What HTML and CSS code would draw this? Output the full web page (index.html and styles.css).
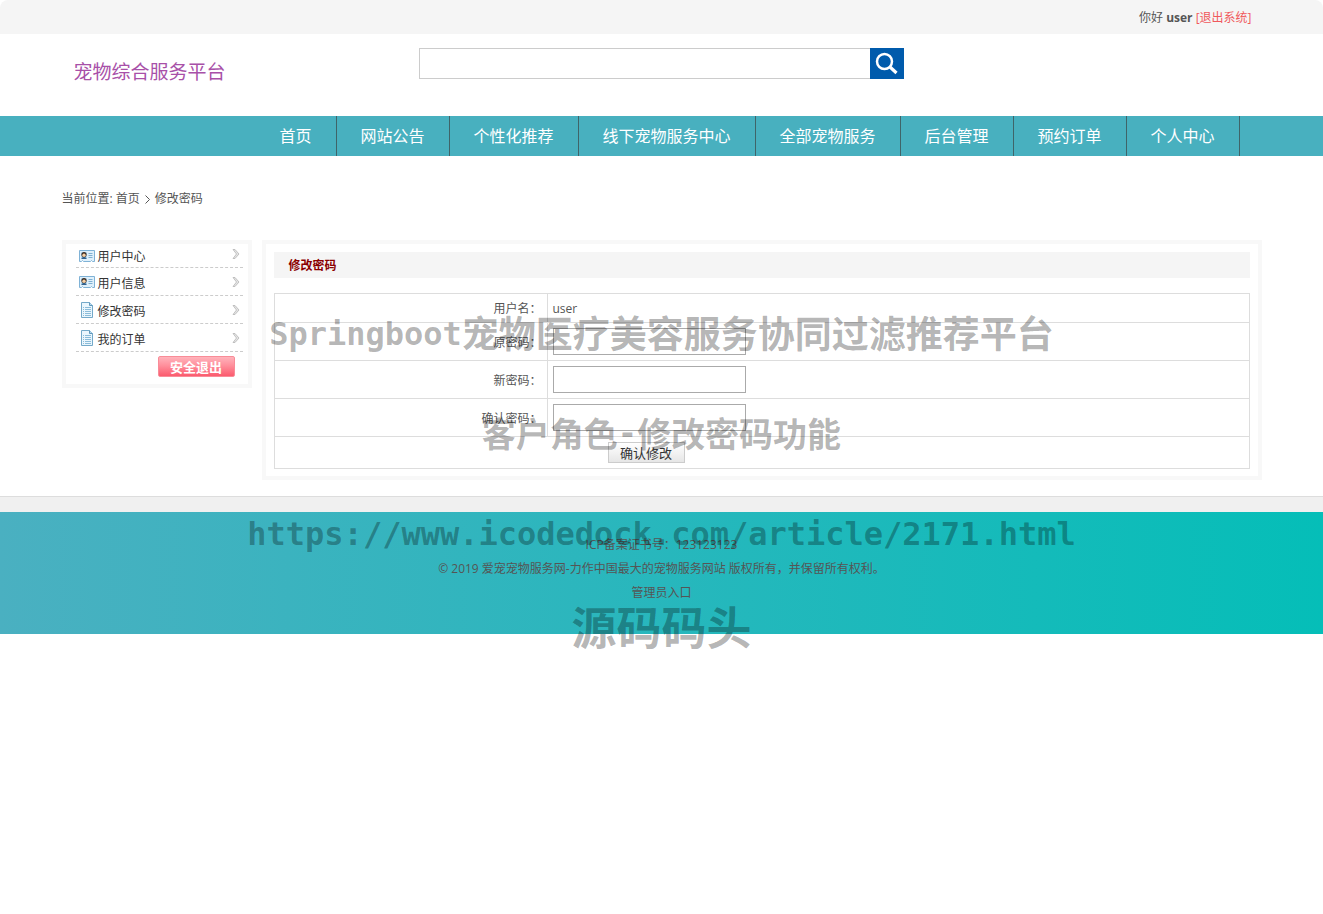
FILE: index.html
```html
<!DOCTYPE html>
<html lang="zh-CN">
<head>
<meta charset="utf-8">
<title>修改密码</title>
<link rel="stylesheet" href="styles.css">
</head>
<body>
<div class="page">
  <div class="topbar">
    <div class="wrap topbar-inner">
      <span>你好 <b>user</b> <a class="logout-link" href="#">[退出系统]</a></span>
    </div>
  </div>
  <header class="wrap header">
    <a class="logo" href="#">宠物综合服务平台</a>
    <form class="search">
      <input class="search-input" type="text" aria-label="搜索">
      <button class="search-btn" type="button" aria-label="搜索">
        <svg width="34" height="31" viewBox="0 0 34 31" fill="none" stroke="#fff"><circle cx="14.500" cy="13.500" r="7.500" stroke-width="2.500"/><path d="M20 19l6.500 6" stroke-width="3.200"/></svg>
      </button>
    </form>
  </header>
  <nav class="nav">
    <div class="wrap nav-inner">
      <a href="#">首页</a><a href="#">网站公告</a><a href="#">个性化推荐</a><a href="#">线下宠物服务中心</a><a href="#">全部宠物服务</a><a href="#">后台管理</a><a href="#">预约订单</a><a href="#">个人中心</a>
    </div>
  </nav>
  <div class="wrap crumbs">
    <span>当前位置: <a href="#">首页</a></span>
    <svg width="5" height="9" viewBox="0 0 5 9" fill="none" stroke="#555"><path d="M.5 .5l4 4-4 4"/></svg>
    <span>修改密码</span>
  </div>
  <main class="wrap main">
    <aside class="side">
      <ul class="menu">
        <li><svg class="ico" viewBox="0 0 16 16"><use href="#card"/></svg><a href="#">用户中心</a><svg class="arrow" viewBox="0 0 8 10"><use href="#chev"/></svg></li>
        <li><svg class="ico" viewBox="0 0 16 16"><use href="#card"/></svg><a href="#">用户信息</a><svg class="arrow" viewBox="0 0 8 10"><use href="#chev"/></svg></li>
        <li><svg class="ico" viewBox="0 0 16 16"><use href="#doc"/></svg><a href="#">修改密码</a><svg class="arrow" viewBox="0 0 8 10"><use href="#chev"/></svg></li>
        <li><svg class="ico" viewBox="0 0 16 16"><use href="#doc"/></svg><a href="#">我的订单</a><svg class="arrow" viewBox="0 0 8 10"><use href="#chev"/></svg></li>
      </ul>
      <button class="exit" type="button">安全退出</button>
    </aside>
    <section class="panel">
      <h1 class="panel-title">修改密码</h1>
      <form>
        <table class="form">
          <tr class="first"><th>用户名：</th><td>user</td></tr>
          <tr><th><label for="old">原密码：</label></th><td><input id="old" type="password"></td></tr>
          <tr><th><label for="new">新密码：</label></th><td><input id="new" type="password"></td></tr>
          <tr><th><label for="again">确认密码：</label></th><td><input id="again" type="password"></td></tr>
          <tr class="last"><td colspan="2"><button class="submit" type="button">确认修改</button></td></tr>
        </table>
      </form>
    </section>
  </main>
  <div class="strip"></div>
  <footer class="footer">
    <p>ICP备案证书号：123123123</p>
    <p>© 2019 爱宠宠物服务网-力作中国最大的宠物服务网站 版权所有，并保留所有权利。</p>
    <p><a href="#">管理员入口</a></p>
  </footer>
  <div class="marks">
    <div class="mark m1"><span class="latin">Springboot</span>宠物医疗美容服务协同过滤推荐平台</div>
    <div class="mark m2">客户角色<span class="latin">-</span>修改密码功能</div>
    <div class="mark m3"><span class="latin">https://www.icodedock.com/article/2171.html</span></div>
    <div class="mark m4">源码码头</div>
  </div>
</div>
<svg class="defs" width="0" height="0">
  <symbol id="card" viewBox="0 0 16 16"><path d="M.5 2.500h15v11h-2l-1-1-1 1h-7l-1-1-1 1h-2z" fill="#dff0fb" stroke="#7fb2d6"/><path d="M2 4h6v7H2z" fill="#b5d9f0"/><circle cx="5" cy="6.500" r="2.600" fill="#3d2b20"/><circle cx="5" cy="7.300" r="1.700" fill="#f6cfa2"/><path d="M2.500 11c0-2.600 5-2.600 5 0z" fill="#33618c"/><path d="M9.500 5.500h4M9.500 7.500h4M9.500 9.500h4" stroke="#7fb0d2"/></symbol>
  <symbol id="doc" viewBox="0 0 16 16"><path d="M2.500 .5h8l3 3v12h-11z" fill="#eaf6fd" stroke="#74a9c9"/><path d="M10.500 .5v3h3" fill="#b9dbef" stroke="#5f97bb"/><path d="M4 5.500h1M4 7.500h1M4 9.500h1M4 11.500h1M4 13.500h1M6 5.500h6M6 7.500h6M6 9.500h6M6 11.500h6M6 13.500h6" stroke="#8bbcd9"/></symbol>
  <symbol id="chev" viewBox="0 0 8 10"><path d="M1 .5h2l4 4.500-4 4.500H1L4.500 5z" fill="#e4e4e4" stroke="#b5b5b5" stroke-width=".8"/></symbol>
</svg>
</body>
</html>
```
FILE: styles.css
```css
* { box-sizing: border-box; }
body {
  margin: 0;
  background: #fff;
  color: #555;
  font: 12px/24px "Open Sans", "Noto Sans CJK SC", sans-serif;
}
a { color: inherit; text-decoration: none; }
.defs { position: absolute; }
.page { position: relative; min-height: 100vh; }
.wrap { max-width: 1200px; margin: 0 auto; }

.topbar { background: #f5f5f5; border-radius: 8px 8px 0 0; }
.topbar-inner {
  display: flex;
  justify-content: flex-end;
  padding: 2px 10px 0 0;
  line-height: 32px;
}
.logout-link { color: #f0595c; }

.header { display: flex; align-items: flex-start; height: 82px; }
.logo {
  width: 357px;
  padding: 24px 0 0 12px;
  color: #a850a8;
  font-size: 19px;
  line-height: 28px;
}
.search { display: flex; margin-top: 14px; }
.search-input {
  width: 451px;
  height: 31px;
  border: 1px solid #ccc;
  border-right: 0;
  padding: 0 8px;
  background: #fff;
}
.search-btn { padding: 0; border: 0; background: #005bac; height: 31px; }
.search-btn svg { display: block; }

.nav { background: #48b0bf; }
.nav-inner { display: flex; padding-left: 194px; }
.nav a {
  padding: 0 24px;
  border-right: 1px solid #3f6469;
  color: #fff;
  font-size: 16px;
  line-height: 40px;
}

.crumbs {
  display: flex;
  align-items: center;
  gap: 5px;
  padding: 31px 0 29px;
}

.main { display: flex; align-items: flex-start; gap: 10px; padding-bottom: 16px; }
.side {
  width: 190px;
  border: 4px solid #f8f8f8;
  padding: 0 5px 7px 10px;
}
.menu { list-style: none; margin: 0; padding: 0; }
.menu li {
  display: flex;
  align-items: center;
  height: 28px;
  border-bottom: 1px dashed #ccc;
  padding: 0 3px;
  color: #333;
}
.menu li:first-child { height: 24px; }
.menu a { padding-top: 5px; }
.menu li:first-child a { padding-top: 2px; }
.menu li:first-child .arrow { margin-bottom: 4px; }
.ico { width: 16px; height: 16px; margin-right: 3px; }
.arrow { width: 8px; height: 10px; margin-left: auto; }
.exit {
  display: block;
  width: 77px;
  height: 21px;
  margin: 4px 8px 0 auto;
  padding: 0;
  border: 1px solid #f98c98;
  border-radius: 2px;
  background: linear-gradient(#ffb3bb, #ff8f9c 45%, #fb5b6e);
  color: #fff;
  font: bold 13px/18px "Noto Sans CJK SC", sans-serif;
}

.panel { flex: 1; border: 4px solid #f8f8f8; padding: 8px 8px 7px; }
.panel-title {
  margin: 0 0 15px;
  padding: 2px 0 0 15px;
  background: #f5f5f5;
  color: #8b0000;
  font-size: 12px;
  line-height: 24px;
}
.form { width: 100%; border-collapse: collapse; }
.form th, .form td { border: 1px solid #ddd; padding: 0 5px; height: 38px; }
.form th { width: 28%; padding-top: 2px; text-align: right; font-weight: normal; }
.form .first th, .form .first td { height: 29px; padding-top: 2px; }
.form .last td { height: 32px; padding-left: 333px; }
.form input {
  display: block;
  width: 193px;
  height: 27px;
  border: 1px solid #aaa;
  padding: 0 4px;
  background: #fff;
}
.submit {
  display: block;
  width: 77px;
  height: 21px;
  padding: 0;
  border: 1px solid #ccc;
  background: linear-gradient(#fff, #e6e6e6);
  color: #333;
  font: 13px/19px "Noto Sans CJK SC", sans-serif;
}

.strip { height: 16px; border-top: 1px solid #ddd; background: #f0f0f0; }
.footer {
  padding: 21px 0 29px;
  background: linear-gradient(90deg, #4ab0c1, #05beb8);
  text-align: center;
}
.footer p { margin: 0; }

.marks {
  position: absolute;
  top: 307px;
  left: 0;
  right: 0;
  color: rgba(0, 0, 0, .3);
  font-family: "Noto Sans CJK SC", sans-serif;
  font-weight: bold;
  text-align: center;
  pointer-events: none;
}
.mark { height: 50px; line-height: 50px; white-space: nowrap; }
.latin {
  font-family: "DejaVu Sans Mono", monospace;
  font-size: 32px;
  line-height: 1;
  vertical-align: 3px;
}
.m1 { font-size: 37px; margin-bottom: 51px; }
.m2 { font-size: 34px; margin-bottom: 49px; }
.m3 { font-size: 37px; margin-bottom: 44px; }
.m4 { font-size: 45px; }
```
